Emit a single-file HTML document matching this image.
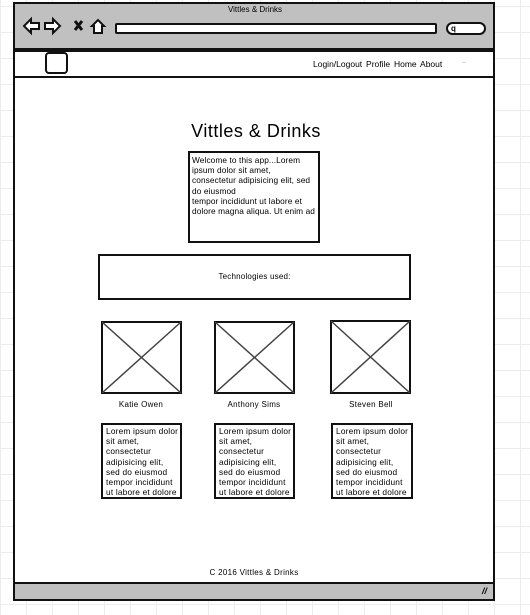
<!DOCTYPE html>
<html><head><style>
*{margin:0;padding:0;box-sizing:border-box}
body{width:530px;height:615px;overflow:hidden;font-family:"Liberation Sans",sans-serif;color:#000;
background-color:#fff;background-image:linear-gradient(#ececec 1px,transparent 1px),linear-gradient(90deg,#ececec 1px,transparent 1px);background-size:26px 26px;background-position:0 6px;position:relative}
.a{position:absolute}
.box{position:absolute;border:2px solid #111;background:#fff}
.t{font-size:8.3px;line-height:10.2px;padding:1px 3px;white-space:nowrap;overflow:hidden;letter-spacing:0.2px}
.nm{position:absolute;font-size:8px;text-align:center;width:80px;letter-spacing:0.3px}
</style></head><body>
<div class="a" style="left:13px;top:2px;width:482px;height:599px;border:2px solid #111;background:#fff"></div>
<div class="a" style="left:13px;top:2px;width:482px;height:48px;background:#c0c0c0;border:2px solid #111"></div>
<div class="a" style="left:0;width:510px;top:5px;text-align:center;font-size:8px">Vittles &amp; Drinks</div>
<svg class="a" style="left:22px;top:16px" width="90" height="20" viewBox="0 0 90 20" fill="#fff" stroke="#111" stroke-width="2">
<path d="M2 10 L9 3 V7 H17 V13 H9 V17 Z"/>
<path d="M38 10 L31 3 V7 H23 V13 H31 V17 Z"/>
<path d="M53 5 L60 14 M60 5 L53 14" stroke-width="3"/>
<path d="M70 10 L76 4 L82 10 H80 V17 H72 V10 Z"/>
</svg>
<div class="a" style="left:115px;top:23px;width:322px;height:11px;border:2px solid #111;background:#fff;border-radius:2px"></div>
<div class="a" style="left:446px;top:22px;width:40px;height:13px;border:2px solid #111;background:#fff;border-radius:7px"></div>
<div class="a" style="left:451px;top:24px;font-size:8px;font-weight:bold">q</div>
<div class="a" style="left:13px;top:50px;width:482px;height:28px;border:2px solid #111;background:#fff"></div>
<div class="a" style="left:45px;top:52px;width:23px;height:22px;border:2px solid #111;border-radius:4px"></div>
<div class="a" style="left:313px;top:59px;font-size:8.5px;word-spacing:1.5px">Login/Logout Profile Home About</div>
<div class="a" style="left:462px;top:58px;font-size:7px;color:#666">..</div>
<div class="a" style="left:0;width:512px;top:121px;text-align:center;font-size:18px;letter-spacing:0.5px">Vittles &amp; Drinks</div>
<div class="box t" style="left:188px;top:151px;width:132px;height:92px;padding:2px 2px;letter-spacing:0.1px">Welcome to this app...Lorem<br>ipsum dolor sit amet,<br>consectetur adipisicing elit, sed<br>do eiusmod<br>tempor incididunt ut labore et<br>dolore magna aliqua. Ut enim ad</div>
<div class="box" style="left:98px;top:254px;width:313px;height:46px;font-size:8px;text-align:center;line-height:42px;letter-spacing:0.2px">Technologies used:</div>
<svg class="a" style="left:0;top:0" width="530" height="615" fill="none" stroke="#444" stroke-width="1.5">
<rect x="102" y="322" width="79" height="71" stroke="#111" stroke-width="2"/><path d="M102 322L181 393M181 322L102 393"/>
<rect x="215" y="322" width="79" height="71" stroke="#111" stroke-width="2"/><path d="M215 322L294 393M294 322L215 393"/>
<rect x="331" y="321" width="79" height="72" stroke="#111" stroke-width="2"/><path d="M331 321L410 393M410 321L331 393"/>
</svg>
<div class="nm" style="left:101px;top:400px">Katie Owen</div>
<div class="nm" style="left:214px;top:400px">Anthony Sims</div>
<div class="nm" style="left:331px;top:400px">Steven Bell</div>
<div class="box t" style="left:101px;top:423px;width:81px;height:76px">Lorem ipsum dolor<br>sit amet,<br>consectetur<br>adipisicing elit,<br>sed do eiusmod<br>tempor incididunt<br>ut labore et dolore</div>
<div class="box t" style="left:214px;top:423px;width:81px;height:76px">Lorem ipsum dolor<br>sit amet,<br>consectetur<br>adipisicing elit,<br>sed do eiusmod<br>tempor incididunt<br>ut labore et dolore</div>
<div class="box t" style="left:331px;top:423px;width:82px;height:76px">Lorem ipsum dolor<br>sit amet,<br>consectetur<br>adipisicing elit,<br>sed do eiusmod<br>tempor incididunt<br>ut labore et dolore</div>
<div class="a" style="left:0;width:508px;top:568px;text-align:center;font-size:8px;letter-spacing:0.3px">C 2016 Vittles &amp; Drinks</div>
<div class="a" style="left:13px;top:582px;width:482px;height:19px;background:#c0c0c0;border:2px solid #111"></div>
<div class="a" style="left:482px;top:586px;font-size:9px;font-weight:bold;font-style:italic">//</div>
</body></html>
